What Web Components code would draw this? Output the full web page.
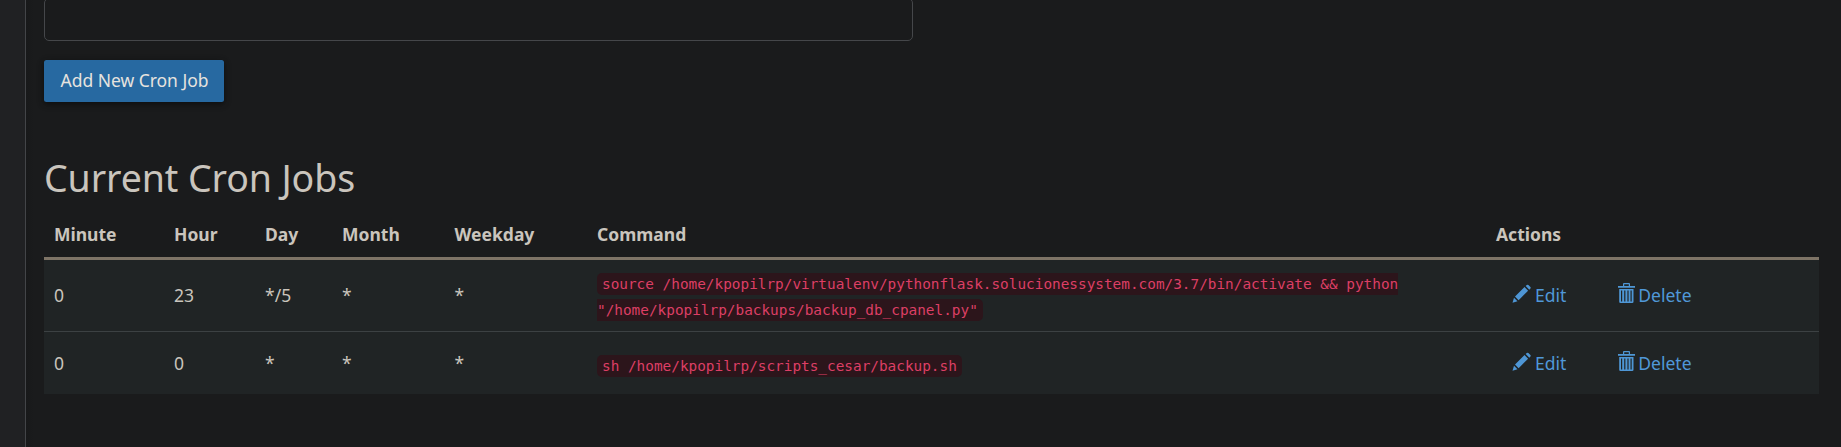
<!DOCTYPE html>
<html lang="en">
<head>
<meta charset="utf-8">
<title>Cron Jobs</title>
<style>
html,body{margin:0;height:100%;overflow:hidden;background:#1a1b1c}
body{font:17.5px/25px "Noto Sans","Open Sans",sans-serif;color:#cac5bd}
</style>
</head>
<body>
<cron-page>
  <cron-field></cron-field>
  <cron-button>Add New Cron Job</cron-button>
  <cron-heading>Current Cron Jobs</cron-heading>
  <cron-table>
    <cron-row minute="0" hour="23" day="*/5" month="*" weekday="*" style="height:71px;--command-pad:0 10px 1px">source /home/kpopilrp/virtualenv/pythonflask.solucionessystem.com/3.7/bin/activate &amp;&amp; python "/home/kpopilrp/backups/backup_db_cpanel.py"</cron-row>
    <cron-row minute="0" hour="0" day="*" month="*" weekday="*" style="height:62px;border-top:1px solid #3c4143">sh /home/kpopilrp/scripts_cesar/backup.sh</cron-row>
  </cron-table>
</cron-page>
<script>
const define = (name, html, setup) => {
  const t = document.createElement('template');
  t.innerHTML = html;
  customElements.define(name, class extends HTMLElement {
    constructor() {
      super();
      this.attachShadow({mode: 'open'}).append(t.content.cloneNode(true));
    }
    connectedCallback() { if (setup) setup(this, this.shadowRoot); }
  });
};
const columns = 'grid-template-columns:120px 91px 77px 112.5px 142.5px 899px 1fr;';

define('cron-page', `<style>
:host{display:grid;grid-template-columns:26px 1fr;height:100vh;overflow:hidden}
aside{background:#202123;border-right:1px solid #434548}
main{box-sizing:border-box;padding:0 22px 0 18px;display:flex;flex-direction:column;align-items:flex-start;background:linear-gradient(90deg,#18191a,#1a1b1c 8px)}
</style><aside></aside><main><slot></slot></main>`);

define('cron-field', `<style>
:host{display:block;width:869px;height:41px;overflow:hidden;flex:none}
div{box-sizing:border-box;height:43px;margin-top:-2px;border:1px solid #45474a;border-radius:5px}
</style><div></div>`);

define('cron-button', `<style>
:host{display:block;margin-top:19px;flex:none}
button{display:block;width:180px;height:42px;padding:0 0 2px 1px;border:0;border-radius:2.5px;background:#2769a1;color:#e6e3df;font:inherit;letter-spacing:-.03px;white-space:nowrap;box-shadow:0 2px 5px rgba(0,0,0,.35),0 2px 8px rgba(0,0,0,.2)}
</style><button><slot></slot></button>`);

define('cron-heading', `<style>
:host{display:block;margin-top:55px;flex:none}
h2{margin:0;font-size:37.5px;line-height:42px;font-weight:400;white-space:nowrap;letter-spacing:-.1px}
</style><h2><slot></slot></h2>`);

define('cron-table', `<style>
:host{display:block;width:1775px;margin-top:14px;flex:none}
header{display:grid;${columns}box-sizing:border-box;height:47px;padding-top:9px;border-bottom:3px solid #7e7466;font-weight:700}
span{padding-left:10px}
</style><header><span>Minute</span><span>Hour</span><span>Day</span><span>Month</span><span>Weekday</span><span>Command</span><span>Actions</span></header><slot></slot>`);

define('cron-row', `<style>
:host{display:grid;${columns}align-items:center;background:#202425}
span{padding-left:10px}
.cmd{padding:var(--command-pad,2px 10px 0);line-height:26px}
code{padding:3px 5px;border-radius:5px;background:#2c151b;color:#dd3f65;font:14.38px/18px "DejaVu Sans Mono",monospace}
.actions{display:flex;padding-left:26px}
cron-action:last-child{margin-left:52px}
</style><span id="minute"></span><span id="hour"></span><span id="day"></span><span id="month"></span><span id="weekday"></span>
<div class="cmd"><code><slot></slot></code></div>
<div class="actions"><cron-action icon="pencil">Edit</cron-action><cron-action icon="trash">Delete</cron-action></div>`,
(el, root) => {
  for (const k of ['minute', 'hour', 'day', 'month', 'weekday']) root.getElementById(k).textContent = el.getAttribute(k);
});

const icons = {
  pencil: '<svg width="20" height="20" viewBox="0 -1.200 20 20"><path d="M.5 18.500l1.500-5 3.500 3.500zM3 12.300L12.500 2.900l3.600 3.600L6.600 16zM13.700 1.900l1.100-1.100q.8-.7 1.600 0l2 2q.7.8 0 1.600l-1.100 1.100z"/></svg>',
  trash: '<svg width="17" height="20" viewBox="0 0 17 20"><path fill-rule="evenodd" d="M0 3h5V1q0-1 1-1h5q1 0 1 1v2h5v1.800H0zM6.200 1.300V3h4.600V1.300zM1.200 6h14.300v12.700q0 1.300-1.300 1.300H2.500q-1.300 0-1.300-1.300zM3 7.500v11h1.200v-11zM6.200 7.500v11h1.200v-11zM9.400 7.500v11h1.200v-11zM12.500 7.500v11h1.200v-11z"/></svg>'
};
define('cron-action', `<style>
:host{display:block;color:#5098d8}
a{display:flex;color:inherit;text-decoration:none}
i{display:block;height:20px;margin:0 3px 0 0}
svg{display:block;fill:#4e96d5}
</style><a><i></i><slot></slot></a>`,
(el, root) => { root.querySelector('i').innerHTML = icons[el.getAttribute('icon')]; });
</script>
</body>
</html>
